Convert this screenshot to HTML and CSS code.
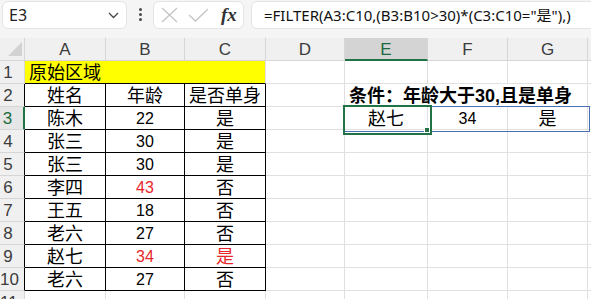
FILE: index.html
```html
<!DOCTYPE html>
<html lang="zh-CN">

<head>
    <meta charset="UTF-8">
    <meta name="viewport" content="width=device-width, initial-scale=1.0">
    <title>FILTER</title>
    <link rel="stylesheet" href="styles.css">
</head>

<body>
    <div class="toolbar">
        <div class="namebox">
            <span>E3</span>
            <svg width="11" height="7" viewBox="0 0 11 7"><polyline points="1,1 5.5,5.5 10,1" fill="none" stroke="#444" stroke-width="1.3"/></svg>
        </div>
        <div class="more"><i></i><i></i><i></i></div>
        <div class="fxbox">
            <svg width="17" height="16" viewBox="0 0 17 16"><path d="M1 1 L16 15 M16 1 L1 15" stroke="#c4c4c4" stroke-width="1.3"/></svg>
            <svg width="21" height="14" viewBox="0 0 21 14"><polyline points="1,7 7.5,13 20,1" fill="none" stroke="#c4c4c4" stroke-width="1.3"/></svg>
            <span class="fx">fx</span>
        </div>
        <div class="formula">=FILTER(A3:C10,(B3:B10&gt;30)*(C3:C10="是"),)</div>
    </div>

    <div class="sheet">
        <!-- column headers -->
        <div class="h corner"><svg width="14" height="14" viewBox="0 0 14 14"><polygon points="14,0 14,14 0,14" fill="#d2d2d2"/></svg></div>
        <div class="h">A</div>
        <div class="h">B</div>
        <div class="h">C</div>
        <div class="h">D</div>
        <div class="h hsel">E</div>
        <div class="h">F</div>
        <div class="h">G</div>
        <div class="h"></div>

        <!-- 1 -->
        <div class="h rh">1</div>
        <div class="title">原始区域</div>
        <div></div><div></div><div></div><div></div><div></div>

        <!-- 2 -->
        <div class="h rh tb">2</div>
        <div class="t">姓名</div>
        <div class="t">年龄</div>
        <div class="t">是否单身</div>
        <div></div>
        <div class="cond">条件：年龄大于30,且是单身</div>
        <div></div>

        <!-- 3 -->
        <div class="h rh rsel">3</div>
        <div class="t">陈木</div>
        <div class="t num">22</div>
        <div class="t">是</div>
        <div></div>
        <div class="active">赵七<span class="handle"></span></div>
        <div class="num">34</div>
        <div>是</div>
        <div></div>

        <!-- 4 -->
        <div class="h rh tb">4</div>
        <div class="t">张三</div>
        <div class="t num">30</div>
        <div class="t">是</div>
        <div></div><div></div><div></div><div></div><div></div>

        <!-- 5 -->
        <div class="h rh tb">5</div>
        <div class="t">张三</div>
        <div class="t num">30</div>
        <div class="t">是</div>
        <div></div><div></div><div></div><div></div><div></div>

        <!-- 6 -->
        <div class="h rh tb">6</div>
        <div class="t">李四</div>
        <div class="t num red">43</div>
        <div class="t">否</div>
        <div></div><div></div><div></div><div></div><div></div>

        <!-- 7 -->
        <div class="h rh tb">7</div>
        <div class="t">王五</div>
        <div class="t num">18</div>
        <div class="t">否</div>
        <div></div><div></div><div></div><div></div><div></div>

        <!-- 8 -->
        <div class="h rh tb">8</div>
        <div class="t">老六</div>
        <div class="t num">27</div>
        <div class="t">否</div>
        <div></div><div></div><div></div><div></div><div></div>

        <!-- 9 -->
        <div class="h rh tb">9</div>
        <div class="t">赵七</div>
        <div class="t num red">34</div>
        <div class="t red">是</div>
        <div></div><div></div><div></div><div></div><div></div>

        <!-- 10 -->
        <div class="h rh tb">10</div>
        <div class="t">老六</div>
        <div class="t num">27</div>
        <div class="t">否</div>
        <div></div><div></div><div></div><div></div><div></div>

        <!-- 11 -->
        <div class="h rh">11</div>
        <div></div><div></div><div></div><div></div><div></div><div></div><div></div><div></div>
    </div>
</body>

</html>
```

FILE: styles.css
```css
* {
    margin: 0;
    padding: 0;
    box-sizing: border-box;
}

body {
    width: 591px;
    height: 299px;
    overflow: hidden;
    background-color: #fff;
    font-family: "Liberation Sans", "Noto Sans CJK SC", sans-serif;
}

/* formula bar */
.toolbar {
    display: flex;
    align-items: flex-start;
    height: 38px;
    padding-top: 1px;
    background-color: #f5f5f5;
}

.namebox {
    display: flex;
    align-items: center;
    justify-content: space-between;
    width: 125px;
    height: 28px;
    margin-left: 2px;
    padding: 0 7px 0 6px;
    background-color: #fff;
    border: 1px solid #e4e4e4;
    border-radius: 6px;
    font: 16px "Noto Sans", sans-serif;
    color: #222;
}

.more {
    display: flex;
    flex-direction: column;
    align-items: center;
    gap: 2px;
    width: 26px;
    padding-top: 7px;
}

.more i {
    width: 3px;
    height: 3px;
    border-radius: 50%;
    background-color: #4a4a4a;
}

.fxbox {
    display: flex;
    align-items: center;
    width: 91px;
    height: 28px;
    padding-left: 7px;
    background-color: #fff;
    border: 1px solid #e4e4e4;
    border-radius: 6px;
}

.fxbox svg:nth-child(2) {
    margin-left: 10px;
}

.fx {
    margin-left: 12px;
    font: italic bold 19px "Liberation Serif", serif;
    color: #333;
}

.formula {
    flex: 1;
    height: 28px;
    margin-left: 7px;
    margin-right: -20px;
    padding-left: 12px;
    background-color: #fff;
    border: 1px solid #e4e4e4;
    border-radius: 6px;
    font: 15px/26px "Noto Sans", "Noto Sans CJK SC", sans-serif;
    color: #111;
    white-space: nowrap;
    overflow: hidden;
}

/* grid */
.sheet {
    display: grid;
    grid-template-columns: 25px 81px 79px 81px 79px 83px 80px 80px 30px;
    grid-auto-rows: 23px;
}

.sheet div {
    padding-top: 1px;
    border-right: 1px solid #e0e0e0;
    border-bottom: 1px solid #e0e0e0;
    font-size: 18px;
    line-height: 22px;
    text-align: center;
    white-space: nowrap;
    color: #000;
}

.sheet .h {
    background-color: #f0f0f0;
    border-color: #d6d6d6;
    font-size: 17px;
    color: #3c3c3c;
}

.sheet .corner {
    display: flex;
    align-items: flex-end;
    justify-content: flex-end;
    padding: 0 2px 4px 0;
}

.sheet .rh {
    padding-right: 8px;
}

.sheet .hsel {
    background-color: #d4d4d4;
    border-bottom: 2px solid #217346;
    color: #1c6b40;
}

.sheet .rsel {
    background-color: #e6e6e6;
    border-right: 2px solid #217346;
    color: #1c6b40;
}

.sheet .tb {
    border-right-color: #000;
}

.sheet .title {
    grid-column: span 3;
    padding-left: 4px;
    background-color: #ffff00;
    border-bottom-color: #000;
    text-align: left;
}

.sheet .t {
    border-color: #000;
}

.sheet .num {
    font-size: 16px;
}

.sheet .red {
    color: #e8262d;
}

.sheet .cond {
    grid-column: span 3;
    padding-left: 4px;
    font-weight: bold;
    text-align: left;
}

.sheet .active {
    position: relative;
}

/* spill range */
.sheet .active::before {
    content: "";
    position: absolute;
    left: -1px;
    top: -1px;
    width: 244px;
    height: 24px;
    border: 1px solid #4a6fb5;
    z-index: 1;
}

/* selected cell */
.sheet .active::after {
    content: "";
    position: absolute;
    left: -2px;
    top: -2px;
    width: 85px;
    height: 26px;
    border: 2px solid #217346;
    z-index: 2;
}

.handle {
    position: absolute;
    left: 79px;
    top: 20px;
    width: 6px;
    height: 6px;
    background-color: #217346;
    border: 1px solid #fff;
    z-index: 3;
}
```
